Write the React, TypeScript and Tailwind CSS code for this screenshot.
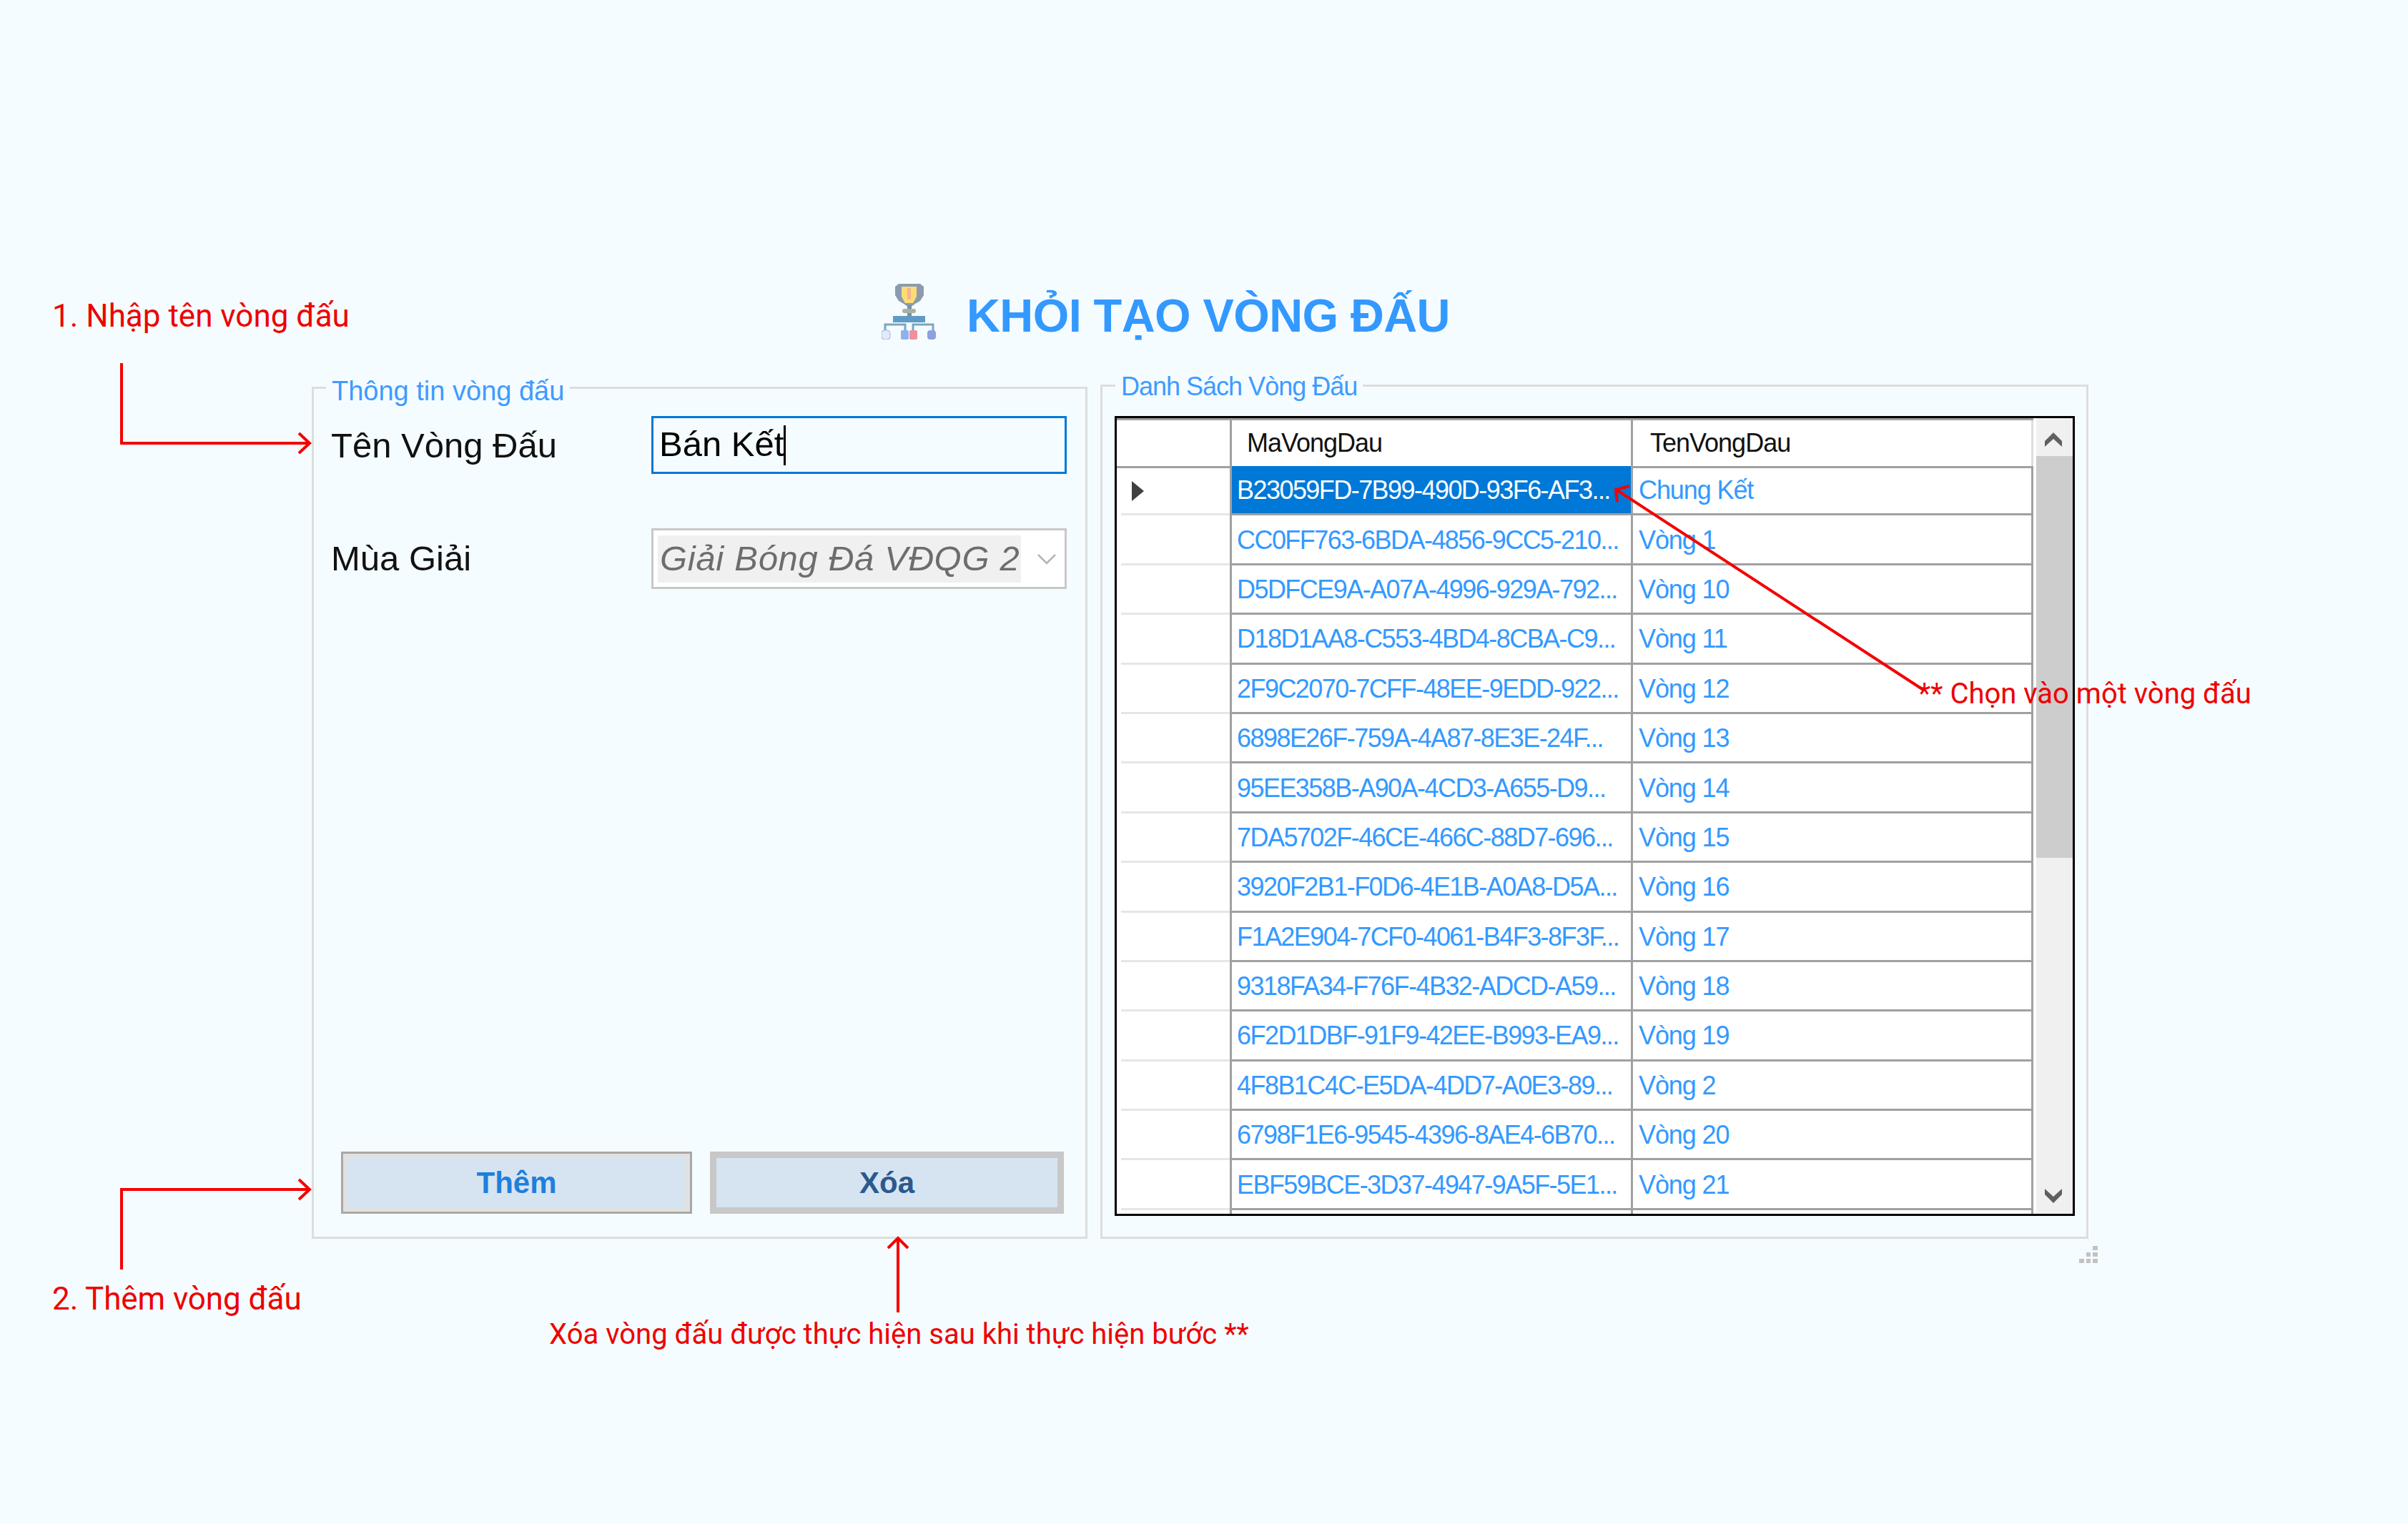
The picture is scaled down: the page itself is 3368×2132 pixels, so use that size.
const rows = [
  ["B23059FD-7B99-490D-93F6-AF3...", "Chung Kết"],
  ["CC0FF763-6BDA-4856-9CC5-210...", "Vòng 1"],
  ["D5DFCE9A-A07A-4996-929A-792...", "Vòng 10"],
  ["D18D1AA8-C553-4BD4-8CBA-C9...", "Vòng 11"],
  ["2F9C2070-7CFF-48EE-9EDD-922...", "Vòng 12"],
  ["6898E26F-759A-4A87-8E3E-24F...", "Vòng 13"],
  ["95EE358B-A90A-4CD3-A655-D9...", "Vòng 14"],
  ["7DA5702F-46CE-466C-88D7-696...", "Vòng 15"],
  ["3920F2B1-F0D6-4E1B-A0A8-D5A...", "Vòng 16"],
  ["F1A2E904-7CF0-4061-B4F3-8F3F...", "Vòng 17"],
  ["9318FA34-F76F-4B32-ADCD-A59...", "Vòng 18"],
  ["6F2D1DBF-91F9-42EE-B993-EA9...", "Vòng 19"],
  ["4F8B1C4C-E5DA-4DD7-A0E3-89...", "Vòng 2"],
  ["6798F1E6-9545-4396-8AE4-6B70...", "Vòng 20"],
  ["EBF59BCE-3D37-4947-9A5F-5E1...", "Vòng 21"],
  ["", ""], // clipped by the grid's bottom edge
]

function TrophyIcon() {
  return (
    <svg width="78" height="78" viewBox="0 0 78 78">
      <path d="M24 0h30l5 4v12l-5 8-7 4-4 3h-8l-4-3-7-4-5-8V4z" fill="#8a9bb0" />
      <path d="M28 4h21v14l-5 9H33l-5-9z" fill="#ffdc73" />
      <rect x="36" y="6" width="5" height="16" fill="#f5b58a" />
      <rect x="36" y="30" width="6" height="16" fill="#6f93ad" />
      <rect x="29" y="35" width="19" height="6" rx="3" fill="#a8b0a0" />
      <rect x="16" y="45" width="45" height="9" fill="#5f9cc5" />
      <path d="M5 66v-9h28v9M44 66v-9h28v9" fill="none" stroke="#7aa6c2" strokeWidth="3" />
      <rect x="0" y="65" width="12" height="13" rx="4" fill="#e2ebfb" stroke="#9fb0d0" />
      <rect x="27" y="65" width="11" height="13" rx="2" fill="#8fb0f0" />
      <rect x="39" y="65" width="11" height="13" rx="2" fill="#f0909a" />
      <rect x="64" y="65" width="12" height="13" rx="4" fill="#8f9fe0" />
    </svg>
  )
}

function Annotations() {
  return (
    <svg className="absolute left-0 top-0 pointer-events-none" width="3368" height="2132" fill="none" stroke="#f50000" strokeWidth="4">
      <path d="M170 508V620H432" />
      <path d="M418 606L433 620L418 634" />
      <path d="M170 1776V1664H432" />
      <path d="M418 1650L433 1664L418 1678" />
      <path d="M1256 1836V1733" />
      <path d="M1242 1746L1256 1732L1270 1746" />
      <path d="M2690 965L2262 686" />
      <path d="M2262 702L2260 685L2279 680" />
    </svg>
  )
}

function ResizeGrip() {
  return (
    <div className="absolute left-[2908px] top-[1743px] grid grid-cols-3 gap-[3px] w-[26px]">
      <span /><span /><span className="h-[6px] bg-[#c2c2c2]" />
      <span /><span className="h-[6px] bg-[#c2c2c2]" /><span className="h-[6px] bg-[#c2c2c2]" />
      <span className="h-[6px] bg-[#c2c2c2]" /><span className="h-[6px] bg-[#c2c2c2]" /><span className="h-[6px] bg-[#c2c2c2]" />
    </div>
  )
}

export default function App() {
  return (
    <div className="relative w-[3368px] h-[2132px] overflow-hidden bg-[#f5fcff] font-['Liberation_Sans',sans-serif]">
      {/* Title */}
      <div className="flex items-center pt-[398px] pl-[1233px] h-[474px]">
        <TrophyIcon />
        <h1 className="ml-[41px] mt-[12px] text-[65px] leading-[76px] font-bold tracking-[-0.6px] text-[#3399ff]">KHỎI TẠO VÒNG ĐẤU</h1>
      </div>

      <div className="flex items-end pl-[436px] mt-[64px] gap-[18px]">
        {/* Left group */}
        <div className="relative w-[1085px] h-[1192px] border-[3px] border-[#dddddd] pt-[38px] pl-[24px] pr-[26px]">
          <div className="absolute left-[17px] -top-[18px] bg-[#f5fcff] px-[8px] text-[38px] leading-[42px] text-[#3f9bff]">Thông tin vòng đấu</div>

          <div className="flex items-center h-[81px]">
            <div className="w-[448px] text-[49px] text-[#111] translate-y-[1px]">Tên Vòng Đấu</div>
            <div className="flex items-center w-[581px] h-[81px] border-[3px] border-[#0078d7] pl-[8px]">
              <span className="text-[49px] leading-[56px] text-black -translate-y-[2px]">Bán Kết</span>
              <span className="w-[3px] h-[56px] bg-black" />
            </div>
          </div>

          <div className="flex items-center h-[85px] mt-[76px]">
            <div className="w-[448px] text-[49px] text-[#111]">Mùa Giải</div>
            <div className="flex items-center w-[581px] h-[85px] border-[3px] border-[#c8c8c8] bg-white pl-[6px]">
              <span className="flex items-center w-[508px] h-[66px] bg-[#f0f0f0] pl-[3px] text-[49px] italic tracking-[0.7px] text-[#6d6d6d] whitespace-nowrap">Giải Bóng Đá VĐQG 2</span>
              <svg className="ml-[23px]" width="26" height="16" viewBox="0 0 26 16" fill="none" stroke="#b5b5b5" strokeWidth="2.5">
                <path d="M1 2L13 14L25 2" />
              </svg>
            </div>
          </div>

          <div className="flex mt-[787px] ml-[14px] gap-[25px]">
            <button className="w-[491px] h-[87px] border-[3px] border-[#a8a8a8] bg-[#d6e4f1] outline outline-[6px] -outline-offset-[9px] outline-[#e1e1e1] text-[42px] font-bold text-[#1e7fdc]">Thêm</button>
            <button className="w-[495px] h-[87px] border-[9px] border-[#c8c8c8] bg-[#d6e4f1] text-[42px] font-bold text-[#2a5a90]">Xóa</button>
          </div>
        </div>

        {/* Right group */}
        <div className="relative w-[1382px] h-[1195px] border-[3px] border-[#dddddd] pt-[41px] pl-[17px]">
          <div className="absolute left-[18px] -top-[21px] bg-[#f5fcff] px-[8px] text-[36px] leading-[42px] text-[#3f9bff] tracking-[-1px]">Danh Sách Vòng Đấu</div>

          <div className="flex w-[1343px] h-[1119px] border-[3px] border-black bg-white overflow-hidden">
            <div className="w-[1283px] h-full">
              <div className="flex h-[64px] border-t-[3px] border-b-[3px] border-[#a0a0a0] box-content -mb-[3px] text-[36px] text-[#111] tracking-[-1px]">
                <div className="w-[161px] border-r-[3px] border-[#a0a0a0]" />
                <div className="flex items-center w-[561px] border-r-[3px] border-[#a0a0a0] pl-[21px]">MaVongDau</div>
                <div className="flex items-center flex-1 border-r-[3px] border-[#dddddd] pl-[24px]">TenVongDau</div>
              </div>
              {rows.map((row, i) => (
                <div key={i} className="flex h-[69.4px]">
                  <div className="relative flex items-center w-[161px] pl-[21px] border-r-[3px] border-[#a0a0a0] after:absolute after:left-[6px] after:right-0 after:bottom-0 after:h-[3px] after:bg-[#e6e6e6]">
                    {i === 0 && <span className="w-0 h-0 border-y-[14px] border-y-transparent border-l-[17px] border-l-[#404040]" />}
                  </div>
                  <div className={`flex items-center w-[561px] pl-[7px] pt-[2px] border-r-[3px] border-r-[#a0a0a0] border-b-[3px] border-b-[#a0a0a0] text-[36px] tracking-[-1.55px] whitespace-nowrap ${i === 0 ? "bg-[#0078d7] text-white" : "text-[#3399ff]"}`}>{row[0]}</div>
                  <div className="flex items-center flex-1 pl-[8px] pt-[2px] border-r-[3px] border-r-[#a0a0a0] border-b-[3px] border-b-[#a0a0a0] text-[36px] tracking-[-1.1px] text-[#3399ff]">{row[1]}</div>
                </div>
              ))}
            </div>
            {/* Scrollbar */}
            <div className="flex flex-col flex-none w-[51px] ml-[4px] bg-[#f0f0f0]">
              <div className="flex items-center justify-center h-[53px] pt-[6px] pr-[3px]">
                <svg width="24" height="20" viewBox="0 0 24 20" fill="#606060"><path d="M12 0L24 12V20L12 9L0 20V12z" /></svg>
              </div>
              <div className="h-[562px] bg-[#cdcdcd]" />
              <div className="flex-1" />
              <div className="flex items-center justify-center h-[46px] pb-[4px] pr-[3px]">
                <svg width="24" height="20" viewBox="0 0 24 20" fill="#606060"><path d="M12 20L24 8V0L12 11L0 0V8z" /></svg>
              </div>
            </div>
          </div>
        </div>
      </div>

      <ResizeGrip />
      <Annotations />

      {/* Red notes */}
      <div className="absolute left-[73px] top-[416px] font-['Roboto',sans-serif] text-[44px] leading-[52px] text-[#ee0000]">1. Nhập tên vòng đấu</div>
      <div className="absolute left-[73px] top-[1791px] font-['Roboto',sans-serif] text-[44px] leading-[52px] tracking-[-0.1px] text-[#ee0000]">2. Thêm vòng đấu</div>
      <div className="absolute left-[768px] top-[1842px] font-['Roboto',sans-serif] text-[40px] leading-[50px] text-[#ee0000]">Xóa vòng đấu được thực hiện sau khi thực hiện bước **</div>
      <div className="absolute left-[2683px] top-[946px] font-['Roboto',sans-serif] text-[40px] leading-[50px] text-[#ee0000]">** Chọn vào một vòng đấu</div>
    </div>
  )
}
